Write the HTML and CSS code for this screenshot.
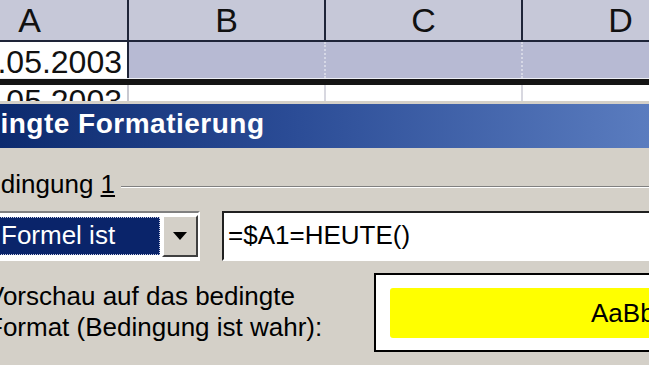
FILE: index.html
```html
<!DOCTYPE html>
<html lang="de">
<head>
    <meta charset="UTF-8">
    <title>Bedingte Formatierung</title>
    <link rel="stylesheet" href="styles.css">
</head>
<body>
<div class="sheet">
    <div class="row head">
        <div class="cell">A</div>
        <div class="cell">B</div>
        <div class="cell">C</div>
        <div class="cell">D</div>
    </div>
    <div class="row r1">
        <div class="cell date">22.05.2003</div>
        <div class="cell sel"></div>
        <div class="cell sel"></div>
        <div class="cell sel"></div>
    </div>
    <div class="row r2">
        <div class="cell date">23.05.2003</div>
        <div class="cell"></div>
        <div class="cell"></div>
        <div class="cell"></div>
    </div>
</div>

<div class="dialog">
    <div class="titlebar"><span class="title">Bedingte Formatierung</span></div>
    <div class="dlg-body">
        <div class="group-head">
            <span class="group-label">Bedingung <u>1</u></span>
            <span class="etch"></span>
        </div>
        <div class="cond-row">
            <div class="combo">
                <div class="combo-field"><span class="hl">Formel ist</span></div>
                <div class="combo-btn">
                    <svg width="14" height="8" viewBox="0 0 14 8"><path d="M0 0h14L7 8z" fill="#000"/></svg>
                </div>
            </div>
            <div class="formula">=$A1=HEUTE()</div>
        </div>
        <div class="preview-row">
            <div class="preview-label">Vorschau auf das bedingte<br>Format (Bedingung ist wahr):</div>
            <div class="preview-box">
                <div class="preview-fill">AaBbCcYyZz</div>
            </div>
        </div>
    </div>
</div>
</body>
</html>
```

FILE: styles.css
```css
html, body {
    margin: 0;
    padding: 0;
}
body {
    width: 649px;
    height: 365px;
    overflow: hidden;
    background: #d4d0c8;
    font-family: "Liberation Sans", Arial, sans-serif;
    color: #000;
}
.sheet {
    margin-left: -68px;
    background: #fff;
}
.row {
    display: grid;
    grid-template-columns: 197px 197px 197px 197px;
    width: 788px;
}
.cell {
    border-right: 2px solid #d8d8e0;
    overflow: hidden;
    white-space: nowrap;
}
.head {
    height: 40px;
    background: #c6c8d8;
    border-bottom: 2px solid #1e2438;
}
.head .cell {
    border-right-color: #1e2438;
    text-align: center;
    font-size: 34px;
    line-height: 40px;
    color: #111;
}
.r1 {
    height: 36px;
    border-bottom: 1px solid #eceef4;
}
.r1 .cell {
    font-size: 32px;
    line-height: 32px;
    padding-top: 4px;
}
.r1 .sel {
    background: #b7bad3;
    border-right: 2px dotted #d6d8e6;
}
.date {
    text-align: right;
    padding-right: 5px;
    color: #111;
}
.r1 .date {
    background: #fff;
    border-right-color: #1e2438;
}
.r2 {
    height: 16px;
    border-top: 6px solid #141414;
}
.r2 .cell {
    font-size: 32px;
    line-height: 32px;
}
.r2 .date {
    border-right-color: #c8c8d0;
}

.dialog {
    border-top: 3px solid #d4d0c8;
}
.titlebar {
    height: 44px;
    line-height: 40px;
    background: linear-gradient(to right, #0c2a6e, #2b4c96 45%, #5a7cbf);
    overflow: hidden;
    white-space: nowrap;
}
.title {
    display: inline-block;
    margin-left: -54px;
    color: #fff;
    font-weight: bold;
    font-size: 28px;
    letter-spacing: 0.5px;
}
.dlg-body {
    font-size: 26px;
    line-height: 31px;
}
.group-head {
    display: flex;
    margin-top: 21px;
    height: 30px;
    white-space: nowrap;
}
.group-label {
    margin-left: -31px;
}
.etch {
    flex: 1;
    align-self: flex-start;
    margin: 17px 0 0 6px;
    border-top: 1px solid #808080;
    border-bottom: 1px solid #fff;
}
.cond-row {
    display: flex;
    margin-top: 12px;
    height: 50px;
}
.combo {
    display: flex;
    width: 220px;
    margin-left: -20px;
    border-top: 2px solid #808080;
    border-left: 2px solid #808080;
    border-bottom: 2px solid #fff;
    border-right: 2px solid #fff;
    background: #fff;
    padding: 2px 0 2px 2px;
    box-sizing: border-box;
}
.combo-field {
    flex: 1;
    padding: 2px 2px 2px 0;
}
.hl {
    display: block;
    height: 100%;
    box-sizing: border-box;
    background: #0a246a;
    color: #fff;
    border: 1px dotted #c9cde6;
    padding-left: 16px;
    line-height: 34px;
    white-space: nowrap;
}
.combo-btn {
    width: 36px;
    background: #d4d0c8;
    border-top: 2px solid #fff;
    border-left: 2px solid #fff;
    border-right: 2px solid #404040;
    border-bottom: 2px solid #404040;
    box-sizing: border-box;
    display: flex;
    align-items: center;
    justify-content: center;
}
.formula {
    flex: 1;
    margin-left: 22px;
    background: #fff;
    border-top: 2px solid #202020;
    border-left: 2px solid #202020;
    border-bottom: 2px solid #fff;
    padding-left: 4px;
    line-height: 44px;
    height: 46px;
    white-space: nowrap;
}
.preview-row {
    display: flex;
    margin-top: 12px;
}
.preview-label {
    flex: 0 0 387px;
    margin-left: -13px;
    padding-top: 8px;
    white-space: nowrap;
}
.preview-box {
    flex: 1;
    border: 2px solid #000;
    background: #fff;
    padding: 13px 0 12px 14px;
    box-sizing: border-box;
    height: 79px;
}
.preview-fill {
    height: 100%;
    background: #ffff00;
    border-radius: 3px;
    padding-left: 201px;
    line-height: 50px;
    white-space: nowrap;
}
```
